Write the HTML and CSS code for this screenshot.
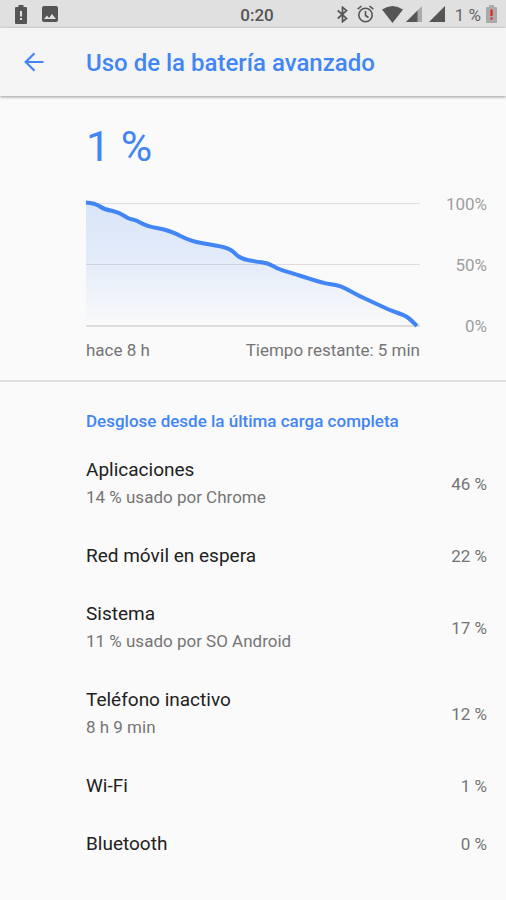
FILE: index.html
```html
<!DOCTYPE html>
<html lang="es">
<head>
<meta charset="utf-8">
<meta name="viewport" content="width=device-width, initial-scale=1">
<title>Uso de la batería avanzado</title>
<link rel="stylesheet" href="styles.css">
</head>
<body>
<div class="status">
  <div class="status-group status-left">
    <svg width="12" height="19" viewBox="0 0 12 19" aria-hidden="true"><path fill="#555" fill-rule="evenodd" d="M3.500 0h5v2H11q1 0 1 1v15q0 1-1 1H1q-1 0-1-1V3q0-1 1-1h2.500zM5 6v5.500h2V6zM5 13v2h2v-2z"/></svg>
    <svg width="16" height="16" viewBox="0 0 16 16" aria-hidden="true"><path fill="#555" fill-rule="evenodd" d="M2 0h12q2 0 2 2v12q0 2-2 2H2q-2 0-2-2V2q0-2 2-2zM2 13h12l-4-5-3 4-2-2.500z"/></svg>
  </div>
  <time class="clock">0:20</time>
  <div class="status-group status-right">
    <svg width="11" height="17" viewBox="0 0 11 17" aria-hidden="true"><path fill="none" stroke="#555" stroke-width="1.700" d="M.8 4.500 9.500 12.400 5.500 15.700V1.300L9.500 4.600.8 12.500"/></svg>
    <svg class="alarm" width="17" height="18" viewBox="0 0 17 18" aria-hidden="true"><g fill="none" stroke="#555" stroke-width="1.600"><circle cx="8.500" cy="10" r="6.700"/><path d="M8.500 6v4.500l3 2M.7 4.200 4.500 1M16.300 4.200 12.500 1"/></g></svg>
    <svg class="wifi" width="21" height="17" viewBox="0 0 21 17" aria-hidden="true"><path fill="#555" d="M0 3.500Q10.500-3.500 21 3.500L10.500 17z"/></svg>
    <svg class="signal" width="16" height="16" viewBox="0 0 16 16" aria-hidden="true"><path fill="#aaa" d="M16 0v16H0z"/><path fill="#555" d="M11.500 4.500V16H0z"/></svg>
    <svg class="signal-full" width="16" height="16" viewBox="0 0 16 16" aria-hidden="true"><path fill="#555" d="M16 0v16H0z"/></svg>
    <span class="level">1 %</span>
    <svg width="11" height="18" viewBox="0 0 11 18" aria-hidden="true"><path fill="#aaa" d="M3 0h5v2h2q1 0 1 1v14q0 1-1 1H1q-1 0-1-1V3q0-1 1-1h2z"/><path fill="#f01414" d="M4.500 4.500h2V11h-2zM4.500 12.500h2v2h-2z"/></svg>
  </div>
</div>
<header class="toolbar">
  <button class="back" type="button" aria-label="Atrás">
    <svg width="20" height="20" viewBox="0 0 20 20" aria-hidden="true"><path fill="none" stroke="#4285f4" stroke-width="2.200" d="M19.500 10H2M10.500 1.200 1.700 10l8.800 8.800"/></svg>
  </button>
  <h1>Uso de la batería avanzado</h1>
</header>
<main>
  <section class="summary">
    <p class="charge">1 %</p>
    <div class="chart">
      <svg class="plot" viewBox="0 0 334 130" preserveAspectRatio="none" role="img" aria-label="Nivel de batería">
        <defs><linearGradient id="fade" gradientUnits="userSpaceOnUse" x1="0" y1="0" x2="0" y2="126"><stop offset="0" stop-color="#4285f4" stop-opacity=".18"/><stop offset=".45" stop-color="#4285f4" stop-opacity=".13"/><stop offset="1" stop-color="#4285f4" stop-opacity="0"/></linearGradient></defs>
        <path fill="#ddd" d="M0 3h334v1H0zM0 64h334v1H0zM0 125h334v2H0z"/>
        <path fill="url(#fade)" d="M0 2.500Q9 3 14 6.500T26 10.800Q33 12.500 38.500 16T47 19.500Q50 20 55 23T72 28.300Q84 30.500 94.500 36T118 43.500Q131 45.500 138 47.300Q145 49 149.500 53.800Q154 58.500 161.500 60T175.500 62.300Q182 63 186.500 65.800T197.500 70.700L207.500 73.700Q211 74.500 224 78.800Q237 83 243.500 83.900T254.500 86.400Q259 88 266 92T280 99L295 106Q303 110 310.500 112.500T321 117Q324 119 331 126H0z"/>
        <path class="line" d="M0 2.500Q9 3 14 6.500T26 10.800Q33 12.500 38.500 16T47 19.500Q50 20 55 23T72 28.300Q84 30.500 94.500 36T118 43.500Q131 45.500 138 47.300Q145 49 149.500 53.800Q154 58.500 161.500 60T175.500 62.300Q182 63 186.500 65.800T197.500 70.700L207.500 73.700Q211 74.500 224 78.800Q237 83 243.500 83.900T254.500 86.400Q259 88 266 92T280 99L295 106Q303 110 310.500 112.500T321 117Q324 119 331 126"/>
      </svg>
      <div class="scale"><span>100%</span><span>50%</span><span>0%</span></div>
      <div class="times"><span>hace 8 h</span><span>Tiempo restante: 5 min</span></div>
    </div>
  </section>
  <section class="usage">
    <h2>Desglose desde la última carga completa</h2>
    <ul>
      <li class="detailed"><div><h3>Aplicaciones</h3><p>14 % usado por Chrome</p></div><span>46 %</span></li>
      <li><h3>Red móvil en espera</h3><span>22 %</span></li>
      <li class="detailed"><div><h3>Sistema</h3><p>11 % usado por SO Android</p></div><span>17 %</span></li>
      <li class="detailed"><div><h3>Teléfono inactivo</h3><p>8 h 9 min</p></div><span>12 %</span></li>
      <li><h3>Wi-Fi</h3><span>1 %</span></li>
      <li><h3>Bluetooth</h3><span>0 %</span></li>
    </ul>
  </section>
</main>
</body>
</html>
```
FILE: styles.css
```css
* { box-sizing: border-box; }
body { margin: 0; background: #fafafa; color: #212121; font-family: Roboto, "Liberation Sans", sans-serif; font-size: 17px; }
h1, h2, h3, p, ul { margin: 0; padding: 0; font-weight: 400; }
svg { display: block; }

.status { display: grid; grid-template-columns: 1fr auto 1fr; align-items: center; height: 28px; padding: 0 9px 0 15px; background: #e0e0e0; color: #555; }
.status-group { display: flex; align-items: center; }
.status-left { gap: 15px; }
.status-right { justify-content: flex-end; }
.clock { padding: 2px 0 0 2px; font-size: 17px; font-weight: 500; line-height: 26px; }
.alarm { margin-left: 9px; }
.wifi { margin-left: 8px; }
.signal { margin-left: 3px; }
.signal-full { margin-left: 7px; }
.level { margin: 0 5px 0 10px; padding-top: 2px; line-height: 26px; color: #666; }

.toolbar { position: relative; display: flex; align-items: center; height: 68px; background: #f5f5f5; box-shadow: 0 1px 3px rgba(0, 0, 0, .4); }
.back { display: flex; justify-content: center; width: 68px; margin-right: 18px; padding: 14px 0; border: 0; background: none; }
h1 { padding-top: 2px; color: #4285f4; font-size: 24px; font-weight: 500; line-height: 32px; }

.summary { padding: 24px 19px 14px 86px; border-bottom: 2px solid #e0e0e0; }
.charge { color: #4285f4; font-size: 43px; line-height: 52px; }
.chart { display: grid; grid-template-columns: 1fr 67px; margin-top: 28px; }
.plot { width: 100%; height: 130px; overflow: visible; }
.line { fill: none; stroke: #4285f4; stroke-width: 4px; stroke-linejoin: round; vector-effect: non-scaling-stroke; }
.scale { display: flex; flex-direction: column; justify-content: space-between; height: 142px; margin: -6px 0 -12px; color: #9e9e9e; line-height: 20px; text-align: right; }
.times { display: flex; justify-content: space-between; margin-top: 4px; color: #757575; line-height: 32px; }

.usage { padding: 23px 19px 24px 86px; }
h2 { color: #4285f4; font-size: 17px; font-weight: 500; line-height: 32px; }
ul { margin-top: 4px; list-style: none; }
li { display: flex; align-items: center; justify-content: space-between; min-height: 58px; }
.detailed { min-height: 86px; }
.detailed div { padding-bottom: 2px; }
h3 { font-size: 19px; line-height: 28px; }
li p, li span { color: #757575; line-height: 26px; }
```
